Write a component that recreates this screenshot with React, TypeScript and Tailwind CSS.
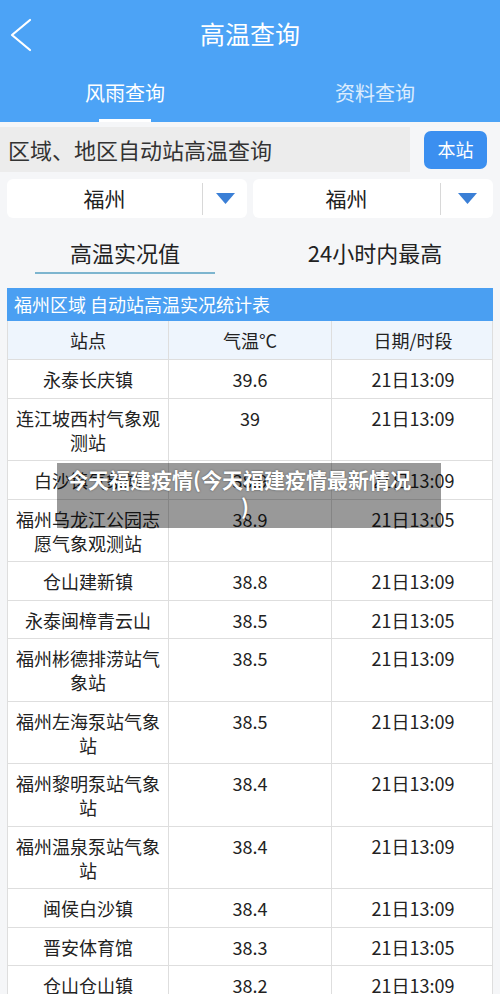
import React from 'react';

// 高温查询页面

const rows: { name: string; temp: string; time: string }[] = [
  { name: '永泰长庆镇', temp: '39.6', time: '21日13:09' },
  { name: '连江坡西村气象观测站', temp: '39', time: '21日13:09' },
  { name: '白沙镇气象站', temp: '38.9', time: '21日13:09' },
  { name: '福州乌龙江公园志愿气象观测站', temp: '38.9', time: '21日13:05' },
  { name: '仓山建新镇', temp: '38.8', time: '21日13:09' },
  { name: '永泰闽樟青云山', temp: '38.5', time: '21日13:05' },
  { name: '福州彬德排涝站气象站', temp: '38.5', time: '21日13:09' },
  { name: '福州左海泵站气象站', temp: '38.5', time: '21日13:09' },
  { name: '福州黎明泵站气象站', temp: '38.4', time: '21日13:09' },
  { name: '福州温泉泵站气象站', temp: '38.4', time: '21日13:09' },
  { name: '闽侯白沙镇', temp: '38.4', time: '21日13:09' },
  { name: '晋安体育馆', temp: '38.3', time: '21日13:05' },
  { name: '仓山仓山镇', temp: '38.2', time: '21日13:09' },
];

const FONT = { fontFamily: '"Noto Sans CJK SC", "Noto Sans", sans-serif' };

export default function App() {
  return (
    <div className="relative w-[500px] h-[994px] overflow-hidden bg-[#f5f6f8] text-[#222]" style={FONT}>
      {/* 顶部栏 */}
      <div className="bg-[#4ca3f6] h-[122px] flex flex-col">
        <div className="relative h-[70px] flex items-center justify-center pb-[4px]">
          <svg className="absolute left-[8px] top-[17px]" width="28" height="36" viewBox="0 0 28 36">
            <polyline points="22,3 4,18 22,33" fill="none" stroke="white" strokeWidth="2.2" strokeLinecap="round" strokeLinejoin="round" />
          </svg>
          <span className="text-white text-[25px] leading-none">高温查询</span>
        </div>
        <div className="grid grid-cols-2 flex-1">
          <div className="flex flex-col items-center justify-end">
            <span className="text-white text-[20px] leading-none mb-[16px]">风雨查询</span>
            <div className="w-[52px] h-[3px] bg-white" />
          </div>
          <div className="flex flex-col items-center justify-end">
            <span className="text-white/80 text-[20px] leading-none mb-[19px]">资料查询</span>
          </div>
        </div>
      </div>

      {/* 搜索 */}
      <div className="flex items-center mt-[5px] h-[45px]">
        <div className="w-[410px] h-full bg-[#ececec] flex items-center pl-[8px] text-[22px] text-[#333]">
          区域、地区自动站高温查询
        </div>
        <button className="ml-[14px] w-[63px] h-[38px] rounded-[7px] bg-[#3b8ff0] text-white text-[18px]">本站</button>
      </div>

      {/* 下拉 */}
      <div className="flex gap-[6px] px-[7px] mt-[7px]">
        <div className="w-[240px] h-[39px] bg-white rounded-[6px] flex items-center">
          <div className="w-[195px] text-center text-[21px]">福州</div>
          <div className="w-px h-[32px] bg-[#d8d8d8]" />
          <div className="flex-1 flex justify-center">
            <svg width="19" height="11" viewBox="0 0 19 11">
              <polygon points="0,0 19,0 9.5,11" fill="#3a7fd6" />
            </svg>
          </div>
        </div>
        <div className="w-[240px] h-[39px] bg-white rounded-[6px] flex items-center">
          <div className="w-[187px] text-center text-[21px]">福州</div>
          <div className="w-px h-[32px] bg-[#d8d8d8]" />
          <div className="flex-1 flex justify-center">
            <svg width="19" height="11" viewBox="0 0 19 11">
              <polygon points="0,0 19,0 9.5,11" fill="#3a7fd6" />
            </svg>
          </div>
        </div>
      </div>

      {/* 子选项卡 */}
      <div className="grid grid-cols-2 mt-[19px] h-[54px]">
        <div className="flex flex-col items-center">
          <span className="text-[22px] leading-[30px] text-[#222]">高温实况值</span>
          <div className="w-[180px] h-[2px] bg-[#7db5cf] mt-[5px]" />
        </div>
        <div className="flex flex-col items-center">
          <span className="text-[22px] leading-[30px] text-[#222]">24小时内最高</span>
        </div>
      </div>

      {/* 表格 */}
      <div className="mx-[7px] mt-[-3px]">
        <div className="bg-[#4a9ff2] h-[33px] flex items-center pl-[7px] text-white text-[18px]">
          福州区域 自动站高温实况统计表
        </div>
        <div className="grid grid-cols-[161px_163px_162px] bg-[#eef5fd] border-x border-[#dedede] text-[18px] text-[#222]">
          <div className="h-[38px] flex items-center justify-center border-r border-[#dedede]">站点</div>
          <div className="h-[38px] flex items-center justify-center border-r border-[#dedede]">气温°C</div>
          <div className="h-[38px] flex items-center justify-center">日期/时段</div>
        </div>
        {rows.map((r, i) => (
          <div key={i} className="grid grid-cols-[161px_163px_162px] bg-white border-x border-t border-[#dedede] text-[18px] leading-[24px] text-[#222]">
            <div className="px-[6px] pt-[7px] pb-[6.5px] text-center border-r border-[#dedede]">{r.name}</div>
            <div className="px-[6px] pt-[7px] pb-[6.5px] text-center border-r border-[#dedede]">{r.temp}</div>
            <div className="px-[6px] pt-[7px] pb-[6.5px] text-center">{r.time}</div>
          </div>
        ))}
      </div>

      {/* 覆盖标题 */}
      <div className="absolute left-[57px] top-[463px] w-[384px] h-[65px] bg-black/40 pl-[10px] pt-[3px]">
        <p className="text-white font-bold text-[21px] leading-[27px] whitespace-nowrap [text-shadow:0_0_2px_rgba(0,0,0,0.5)]">
          今天福建疫情(今天福建疫情最新情况
          <br />
          <span className="pl-[174px]">)</span>
        </p>
      </div>
    </div>
  );
}
